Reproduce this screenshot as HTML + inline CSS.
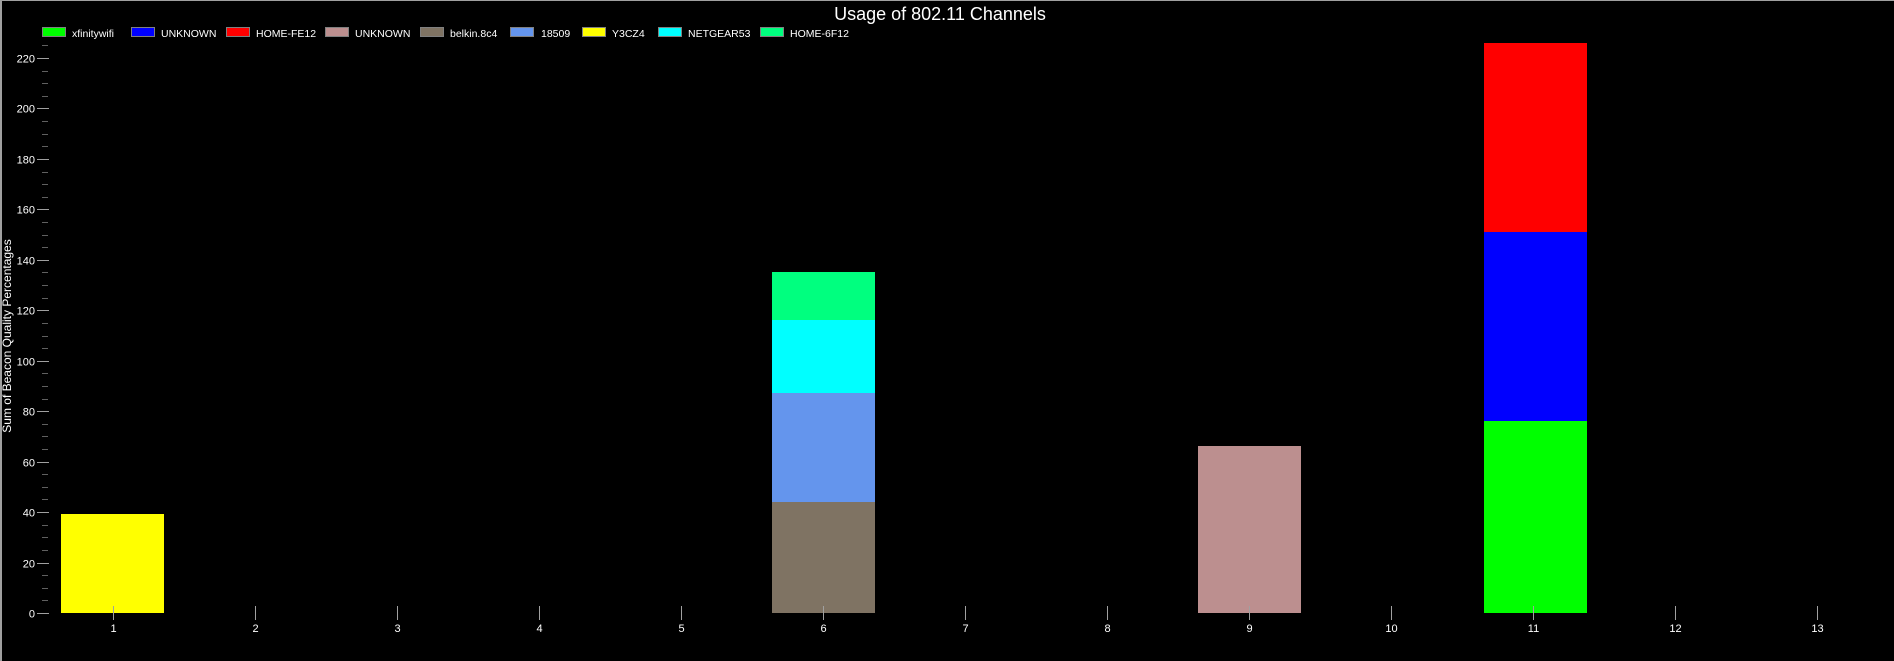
<!DOCTYPE html>
<html><head><style>
html,body{margin:0;padding:0;background:#000;}
svg{display:block;font-family:"Liberation Sans",Arial,sans-serif;}
</style></head><body>
<svg width="1894" height="661" viewBox="0 0 1894 661" xmlns="http://www.w3.org/2000/svg">
<rect x="0" y="0" width="1894" height="661" fill="#000"/>
<rect x="0" y="0" width="1894" height="1" fill="#a0a0a0"/>
<rect x="0" y="0" width="2" height="661" fill="#a0a0a0"/>
<text x="940" y="20" fill="#fff" font-size="18" text-anchor="middle">Usage of 802.11 Channels</text>
<g fill="#fff" stroke="#808080" stroke-width="1">
<rect x="42.5" y="27.5" width="23" height="9" fill="#00ff00"/>
<rect x="131.5" y="27.5" width="23" height="9" fill="#0000ff"/>
<rect x="226.5" y="27.5" width="23" height="9" fill="#ff0000"/>
<rect x="325.5" y="27.5" width="23" height="9" fill="#bc8f8f"/>
<rect x="420.5" y="27.5" width="23" height="9" fill="#7f7363"/>
<rect x="510.5" y="27.5" width="23" height="9" fill="#6495ed"/>
<rect x="582.5" y="27.5" width="23" height="9" fill="#ffff00"/>
<rect x="658.5" y="27.5" width="23" height="9" fill="#00ffff"/>
<rect x="760.5" y="27.5" width="23" height="9" fill="#00ff7f"/>
</g>
<g font-size="10.5" fill="#fff">
<text x="72" y="37">xfinitywifi</text>
<text x="161" y="37">UNKNOWN</text>
<text x="256" y="37">HOME-FE12</text>
<text x="355" y="37">UNKNOWN</text>
<text x="450" y="37">belkin.8c4</text>
<text x="541" y="37">18509</text>
<text x="612" y="37">Y3CZ4</text>
<text x="688" y="37">NETGEAR53</text>
<text x="790" y="37">HOME-6F12</text>
</g>
<text transform="translate(11,336) rotate(-90)" fill="#fff" font-size="12" text-anchor="middle">Sum of Beacon Quality Percentages</text>
<g id="yaxis" stroke="#a0a0a0" stroke-width="1"></g>
<g id="ylab" fill="#fff" font-size="11" text-anchor="end"></g>
<rect x="61" y="514" width="103" height="99" fill="#ffff00"/>
<rect x="772" y="502" width="103" height="111" fill="#7f7363"/>
<rect x="772" y="393" width="103" height="109" fill="#6495ed"/>
<rect x="772" y="320" width="103" height="73" fill="#00ffff"/>
<rect x="772" y="272" width="103" height="48" fill="#00ff7f"/>
<rect x="1198" y="446" width="103" height="167" fill="#bc8f8f"/>
<rect x="1484" y="421" width="103" height="192" fill="#00ff00"/>
<rect x="1484" y="232" width="103" height="189" fill="#0000ff"/>
<rect x="1484" y="43" width="103" height="189" fill="#ff0000"/>
<g id="xaxis" stroke="#a0a0a0" stroke-width="1"></g>
<g id="xlab" fill="#fff" font-size="11" text-anchor="middle"></g>
<script>
var ns="http://www.w3.org/2000/svg";
var ya=document.getElementById("yaxis"),yl=document.getElementById("ylab");
var k=555/220;
for(var v=0;v<=225;v+=5){
 var y=Math.round(613-v*k)+0.5;
 var l=document.createElementNS(ns,"line");
 var maj=(v%20==0);
 l.setAttribute("x1",maj?37:42);l.setAttribute("x2",maj?49:48);
 l.setAttribute("y1",y);l.setAttribute("y2",y);
 if(!maj)l.setAttribute("stroke","#606060");
 ya.appendChild(l);
 if(maj){var t=document.createElementNS(ns,"text");t.setAttribute("x",35);t.setAttribute("y",y+4);t.textContent=v;yl.appendChild(t);}
}
var xa=document.getElementById("xaxis"),xl=document.getElementById("xlab");
for(var n=1;n<=13;n++){
 var x=113+(n-1)*142+0.5;
 var l=document.createElementNS(ns,"line");
 l.setAttribute("x1",x);l.setAttribute("x2",x);l.setAttribute("y1",606);l.setAttribute("y2",620);
 xa.appendChild(l);
 var t=document.createElementNS(ns,"text");t.setAttribute("x",x);t.setAttribute("y",632);t.textContent=n;xl.appendChild(t);
}
</script>
</svg>
</body></html>
